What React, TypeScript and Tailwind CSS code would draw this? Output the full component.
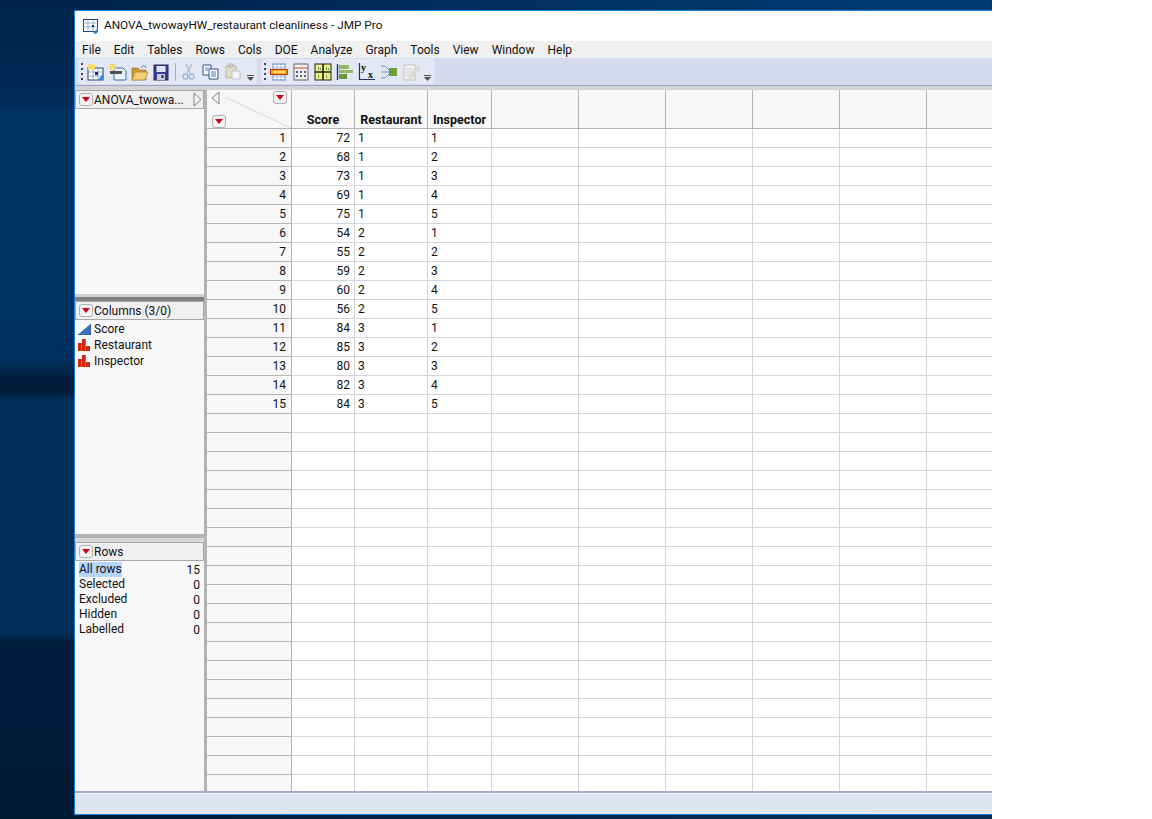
import React from "react";

const rows = [
  [72, 1, 1],
  [68, 1, 2],
  [73, 1, 3],
  [69, 1, 4],
  [75, 1, 5],
  [54, 2, 1],
  [55, 2, 2],
  [59, 2, 3],
  [60, 2, 4],
  [56, 2, 5],
  [84, 3, 1],
  [85, 3, 2],
  [80, 3, 3],
  [82, 3, 4],
  [84, 3, 5],
];

const menus = ["File", "Edit", "Tables", "Rows", "Cols", "DOE", "Analyze", "Graph", "Tools", "View", "Window", "Help"];
const rowStates = [
  ["All rows", 15],
  ["Selected", 0],
  ["Excluded", 0],
  ["Hidden", 0],
  ["Labelled", 0],
];

const emptyCols = [87, 87, 87, 87, 87, 87];

const RedMenu = () => (
  <span className="flex h-[13px] w-[14px] shrink-0 items-center justify-center rounded-[3px] border border-[#b0b0b0] bg-[#f4f4f4]">
    <svg width="8" height="5" viewBox="0 0 8 5">
      <path d="M0 0h8L4 5z" fill="#d0021b" />
    </svg>
  </span>
);

const NominalIcon = () => (
  <svg width="13" height="12" viewBox="0 0 13 12" className="shrink-0">
    <path d="M0 4h3.700v8H0zM4 0h3.700v12H4zM8 7h4v5H8z" fill="#d4260c" />
  </svg>
);

const ContinuousIcon = () => (
  <svg width="13" height="12" viewBox="0 0 13 12" className="shrink-0">
    <path d="M0 12 13 1v11z" fill="#3a70c0" />
    <path d="M0 12 13 1v11z" fill="none" stroke="#1c4a90" strokeWidth="0.6" />
  </svg>
);

const Grip = () => (
  <span className="mr-[3px] flex h-[18px] w-[3px] shrink-0 flex-col justify-between">
    <i className="h-[2px] w-[2px] bg-[#404060]" />
    <i className="h-[2px] w-[2px] bg-[#404060]" />
    <i className="h-[2px] w-[2px] bg-[#404060]" />
    <i className="h-[2px] w-[2px] bg-[#404060]" />
  </span>
);

const Overflow = () => (
  <span className="ml-auto flex flex-col items-center self-end pb-[3px]">
    <i className="mb-[1px] h-[1px] w-[7px] bg-[#505050]" />
    <svg width="7" height="4" viewBox="0 0 7 4">
      <path d="M0 0h7L3.500 4z" fill="#505050" />
    </svg>
  </span>
);

const Ico = ({ children }: { children: React.ReactNode }) => (
  <svg width="18" height="18" viewBox="0 0 18 18" className="shrink-0">
    {children}
  </svg>
);

const tools1 = [
  <Ico key="new">
    <rect x="1" y="5" width="15" height="12" fill="#fff" stroke="#1d3f80" />
    <path d="M1 9h15M1 13h15M6 5v12M11 5v12" stroke="#6a8cc0" strokeWidth="0.7" />
    <path d="M1 1h7v6H1z" fill="#f6d860" />
    <path d="M2 2h1v1H2zM5 1h1v1H5zM3 5h1v1H3zM6 4h1v1H6z" fill="#fff" />
    <rect x="8" y="9" width="3" height="3" fill="#203060" />
    <path d="m11 17 5-6 1 3-3 3z" fill="#2a8ad0" />
  </Ico>,
  <Ico key="script">
    <path d="M5 5h9l3 3v9H5z" fill="#eef2f8" stroke="#3070b0" />
    <path d="M1 8h12v3H1z" fill="#505050" />
    <path d="M1 1h6v6H1z" fill="#f4d668" />
    <path d="M2 2h1v1H2zM5 2h1v1H5zM3 5h1v1H3z" fill="#fff" />
  </Ico>,
  <Ico key="open">
    <path d="M1 5h6l2 2h6v10H1z" fill="#c99a3c" stroke="#8a6a20" strokeWidth="0.6" />
    <path d="M4 9h13l-3 8H1z" fill="#f2cf74" stroke="#a07a28" strokeWidth="0.6" />
    <path d="M10 5c1-3 5-3 5 0" fill="none" stroke="#5078a8" />
  </Ico>,
  <Ico key="save">
    <rect x="1" y="2" width="14" height="15" fill="#3a3f96" stroke="#28285e" />
    <rect x="3.500" y="3" width="9" height="6" fill="#dfe6f8" />
    <rect x="4" y="11" width="8" height="6" fill="#c8ccd8" />
    <rect x="8.500" y="12" width="2" height="3" fill="#28285e" />
  </Ico>,
];

const tools2 = [
  <Ico key="cut">
    <path d="M6 1l4 9M12 1 7 10" stroke="#aab6c8" strokeWidth="1.4" fill="none" />
    <circle cx="5.500" cy="13.500" r="2.500" fill="none" stroke="#a4b8dc" strokeWidth="1.4" />
    <circle cx="11.500" cy="13.500" r="2.500" fill="none" stroke="#a4b8dc" strokeWidth="1.4" />
  </Ico>,
  <Ico key="copy">
    <path d="M1 2h8v10H1z" fill="#fff" stroke="#2c4f94" />
    <path d="M7 6h9v10H7z" fill="#fff" stroke="#2c4f94" />
    <path d="M3 5h4M3 7h3M9 9h5M9 11h5M9 13h5" stroke="#4a78c0" />
  </Ico>,
  <Ico key="paste">
    <path d="M2 3h10v12H2z" fill="#e4dcc0" stroke="#b8b4a8" />
    <path d="M5 1h4v3H5z" fill="#d8d8dc" stroke="#b0b0b0" />
    <path d="M8 8h8v8H8z" fill="#f4f4f8" stroke="#c0c0cc" />
  </Ico>,
];

const tools3 = [
  <Ico key="table">
    <rect x="3" y="1" width="12" height="16" fill="#f0f4fc" stroke="#6a8cc0" />
    <path d="M3 5h12M3 13h12M7 1v16M11 1v16" stroke="#8aa4d0" strokeWidth="0.7" />
    <rect x="0.500" y="6.500" width="17" height="5" fill="#e8a020" stroke="#c03a18" />
    <path d="M3 8h12v2H3z" fill="#f6dc60" />
  </Ico>,
  <Ico key="calc">
    <rect x="2" y="1" width="14" height="16" fill="#eef0f4" stroke="#606468" />
    <path d="M2 5h14" stroke="#e07060" strokeWidth="1.4" />
    <path d="M4 8h2v2H4zM8 8h2v2H8zM12 8h2v2h-2zM4 12h2v2H4zM8 12h2v2H8zM12 12h2v2h-2z" fill="#5a6068" />
  </Ico>,
  <Ico key="quad">
    <rect x="1" y="1" width="16" height="16" fill="#f4f088" stroke="#202020" />
    <path d="M9 1v16M1 9h16" stroke="#202020" strokeWidth="1.6" />
    <path d="M4 4h1v3H4zM6 5h1v2H6zM12 4h1v3h-1zM14 5h1v2h-1zM4 12h1v3H4zM12 12h1v3h-1z" fill="#5a9a3a" />
  </Ico>,
  <Ico key="bars">
    <path d="M1.500 1v16" stroke="#203070" strokeWidth="1.4" />
    <path d="M3 2h10v4H3z" fill="#94b860" />
    <path d="M3 7h14v3H3z" fill="#94b860" />
    <path d="M3 11h8v5H3z" fill="#6c983c" />
  </Ico>,
  <Ico key="yx">
    <path d="M1.500 0v16.500H17" fill="none" stroke="#203070" strokeWidth="1.2" />
    <text x="3" y="8" fontSize="10" fontWeight="700" fontFamily="Liberation Serif, serif" fill="#101010">y</text>
    <text x="10" y="15" fontSize="10" fontWeight="700" fontFamily="Liberation Serif, serif" fill="#101010">x</text>
  </Ico>,
  <Ico key="fit">
    <path d="M1 3h4l4 4M1 9h8M1 15h4l4-4" fill="none" stroke="#7a94c0" />
    <rect x="9" y="5" width="8" height="8" fill="#6aa33c" />
  </Ico>,
  <Ico key="edit">
    <rect x="2" y="2" width="11" height="15" fill="#f2f2f2" stroke="#c0c0c0" />
    <path d="M4 6h7M4 9h7M4 12h7" stroke="#c8c8c8" />
    <path d="m7 14 9-10 2 2-10 10z" fill="#e0e0d8" stroke="#c8c8c0" strokeWidth="0.6" />
  </Ico>,
];

const PanelHeader = ({ children }: { children: React.ReactNode }) => (
  <div className="flex h-[19px] shrink-0 items-center gap-[1px] border border-[#a8a8a8] bg-[#f0f0f0] pl-[3px]">
    <RedMenu />
    {children}
  </div>
);

const App = () => {
  const tableRows = Array.from({ length: 36 }, (_, i) => i);

  return (
    <div className="flex h-[819px] w-[1152px] overflow-hidden bg-white font-['Roboto',sans-serif] text-[12px] leading-none text-[#101010]">
      <div className="flex h-full w-[992px] flex-col overflow-hidden pb-[4px] pl-[74px] pt-[10px] [background:linear-gradient(90deg,transparent_10%,#003a72_90%)_0_0/100%_10px_no-repeat,linear-gradient(90deg,transparent_10%,#0a2d55_90%)_0_100%/100%_4px_no-repeat,linear-gradient(180deg,#01224a_0,#012a56_100px,#023262_112px,#003060_360px,#01244a_372px,#011c38_380px,#011e3c_392px,#012f5a_400px,#002f58_632px,#001d3e_642px,#001a34_819px)]">
        <div className="flex min-h-0 flex-1 flex-col border-y border-l border-[#0f82e0] bg-white">
          <div className="flex h-[30px] shrink-0 items-center gap-[5px] pl-[8px] text-[11.800px]">
            <svg width="16" height="16" viewBox="0 0 16 16">
              <rect x="0.500" y="1.500" width="14" height="12" fill="#fff" stroke="#1d3f80" />
              <path d="M0 5h15M0 9h15M5 1v13M10 1v13" stroke="#7090c0" strokeWidth="0.7" />
              <rect x="9" y="7" width="2" height="2" fill="#203060" />
              <path d="m10 15 5-5v4l-2 2z" fill="#2a8ad0" />
            </svg>
            <span>ANOVA_twowayHW_restaurant cleanliness - JMP Pro</span>
          </div>

          <div className="flex h-[17px] shrink-0 items-center gap-[13px] bg-[#f0f0f0] pl-[7px]">
            {menus.map((m) => (
              <span key={m}>{m}</span>
            ))}
          </div>

          <div className="flex h-[27px] shrink-0 items-center gap-[4px] bg-[#d5daed] pl-[3px]">
            <div className="flex h-[25px] w-[179px] items-center rounded-[3px] bg-[#e4e8f5] pl-[3px] pr-[3px]">
              <Grip />
              <div className="flex items-center gap-[4px]">{tools1}</div>
              <i className="mx-[4px] h-[18px] w-[1px] bg-[#a8aebd]" />
              <div className="flex items-center gap-[4px]">{tools2}</div>
              <Overflow />
            </div>
            <div className="flex h-[25px] w-[174px] items-center rounded-[3px] bg-[#e4e8f5] pl-[3px] pr-[4px]">
              <Grip />
              <div className="flex items-center gap-[4px]">{tools3}</div>
              <Overflow />
            </div>
          </div>

          <div className="h-[5px] shrink-0 border-t border-[#a0a4c4] bg-[#d4d4d4]" />

          <div className="flex min-h-0 flex-1 overflow-hidden">
            <div className="flex w-[129px] shrink-0 flex-col bg-[#f8f8f8]">
              <div className="flex h-[204px] shrink-0 flex-col">
                <PanelHeader>
                  <span>ANOVA_twowa...</span>
                  <svg width="9" height="15" viewBox="0 0 9 15" className="ml-auto mr-[1px] shrink-0">
                    <path d="M1 1l7 6.500-7 6.500z" fill="#f4f4f4" stroke="#808080" />
                  </svg>
                </PanelHeader>
              </div>
              <div className="h-[3px] shrink-0 bg-[#d0d0d0]" />
              <div className="h-[4px] shrink-0 bg-[#808080]" />
              <PanelHeader>
                <span>Columns (3/0)</span>
              </PanelHeader>
              <div className="flex flex-col gap-[3px] pl-[3px] pt-[2px]">
                <div className="flex h-[13px] items-center gap-[3px]">
                  <ContinuousIcon />
                  <span>Score</span>
                </div>
                <div className="flex h-[13px] items-center gap-[3px]">
                  <NominalIcon />
                  <span>Restaurant</span>
                </div>
                <div className="flex h-[13px] items-center gap-[3px]">
                  <NominalIcon />
                  <span>Inspector</span>
                </div>
              </div>
              <div className="flex-1" />
              <div className="h-[4px] shrink-0 bg-[#b4b4b4]" />
              <div className="h-[4px] shrink-0 bg-[#d8d8d8]" />
              <PanelHeader>
                <span>Rows</span>
              </PanelHeader>
              <div className="flex h-[230px] shrink-0 flex-col pl-[4px] pr-[4px] pt-[1px]">
                {rowStates.map(([name, n], i) => (
                  <div key={name} className="flex h-[15px] shrink-0 items-center justify-between">
                    <span className={i === 0 ? "bg-[#b5d7fb] leading-[15px]" : "leading-[15px]"}>{name}</span>
                    <span>{n}</span>
                  </div>
                ))}
              </div>
            </div>

            <div className="w-[3px] shrink-0 bg-[#b4b4b4]" />

            <div className="flex min-w-0 flex-1 flex-col overflow-hidden">
              <div className="flex h-[39px] shrink-0 border-b border-[#b4b4b4] bg-[#f7f7f7] text-[12.500px] font-bold">
                <div className="relative w-[85px] shrink-0 border-r border-[#b4b4b4]">
                  <svg width="9" height="14" viewBox="0 0 9 14" className="absolute left-[4px] top-[1px]">
                    <path d="M8 1 1 7l7 6z" fill="#f4f4f4" stroke="#808080" />
                  </svg>
                  <svg width="66" height="31" viewBox="0 0 66 31" className="absolute left-[18px] top-[7px]">
                    <path d="m0 0 66 31" stroke="#d8d8e4" />
                  </svg>
                  <div className="absolute left-[66px] top-[1px]">
                    <RedMenu />
                  </div>
                  <div className="absolute left-[5px] top-[25px]">
                    <RedMenu />
                  </div>
                </div>
                <div className="flex w-[63px] shrink-0 items-end justify-center border-r border-[#b4b4b4] pb-[2px]">Score</div>
                <div className="flex w-[73px] shrink-0 items-end justify-center border-r border-[#b4b4b4] pb-[2px]">Restaurant</div>
                <div className="flex w-[64px] shrink-0 items-end justify-center border-r border-[#b4b4b4] pb-[2px]">Inspector</div>
                {emptyCols.map((w, i) => (
                  <div key={i} style={{ width: w }} className="shrink-0 border-r border-[#b4b4b4]" />
                ))}
              </div>

              {tableRows.map((i) => {
                const r = rows[i];
                return (
                  <div key={i} className="flex h-[19px] shrink-0 border-b border-[#d4d4dc]">
                    <div className="-mb-px flex w-[85px] shrink-0 items-center justify-end border-r border-b border-[#b4b4b4] bg-[#f7f7f7] pr-[5px]">
                      {r ? i + 1 : ""}
                    </div>
                    <div className="flex w-[63px] shrink-0 items-center justify-end border-r border-[#d4d4dc] pr-[4px]">{r?.[0]}</div>
                    <div className="flex w-[73px] shrink-0 items-center border-r border-[#d4d4dc] pl-[3px]">{r?.[1]}</div>
                    <div className="flex w-[64px] shrink-0 items-center border-r border-[#d4d4dc] pl-[3px]">{r?.[2]}</div>
                    {emptyCols.map((w, j) => (
                      <div key={j} style={{ width: w }} className="shrink-0 border-r border-[#d4d4dc]" />
                    ))}
                  </div>
                );
              })}
            </div>
          </div>

          <div className="h-[3px] shrink-0 border-t-2 border-[#a4a8c4] bg-[#f0f2f8]" />
          <div className="h-[20px] shrink-0 bg-[#e0e6f0]" />
        </div>
      </div>
    </div>
  );
};

export default App;
